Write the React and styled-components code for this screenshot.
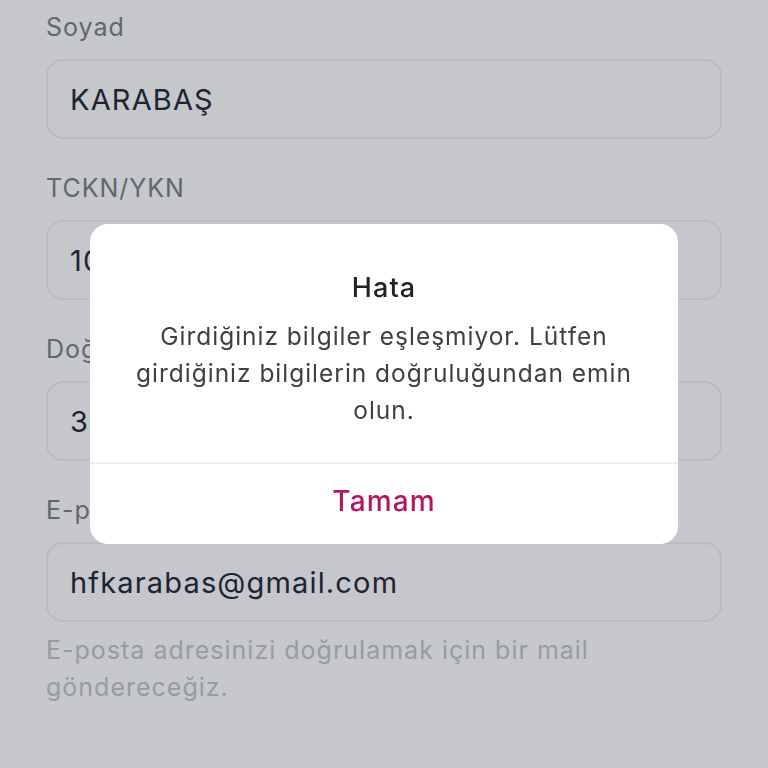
import React from 'react';
import styled, { createGlobalStyle } from 'styled-components';

const GlobalStyle = createGlobalStyle`
  * { box-sizing: border-box; }
  html, body { margin: 0; padding: 0; background: #ffffff; }
  body { font-family: Inter, "Noto Sans", "Liberation Sans", sans-serif; }
`;

const Page = styled.div`
  min-height: 768px;
  padding: 11px 46px 0 46px;
  background: #ffffff;
  display: flex;
  flex-direction: column;
`;

const Field = styled.div`
  display: flex;
  flex-direction: column;
  gap: 16px;
  margin-bottom: 33px;
`;

const Label = styled.label`
  font-size: 25px;
  line-height: 32px;
  letter-spacing: 0.04em;
  color: #7c8086;
`;

const InputBox = styled.div`
  height: 80px;
  border: 2px solid #eeeff2;
  border-radius: 17px;
  background: #fefefe;
  display: flex;
  align-items: center;
  padding: 0 22px;
  font-size: 29px;
  letter-spacing: 0.04em;
  color: #232837;
  white-space: nowrap;
  overflow: hidden;
`;

const Helper = styled.p`
  margin: -23px 0 0 0;
  font-size: 25px;
  line-height: 37px;
  letter-spacing: 0.04em;
  color: #c2c5cc;
  max-width: 580px;
`;

const Overlay = styled.div`
  position: fixed;
  inset: 0;
  background: rgba(17, 24, 39, 0.24);
  display: flex;
  align-items: center;
  justify-content: center;
`;

const Dialog = styled.div`
  width: 588px;
  height: 320px;
  background: #ffffff;
  border-radius: 18px;
  display: flex;
  flex-direction: column;
  overflow: hidden;
`;

const DialogBody = styled.div`
  flex: 1;
  padding: 47px 36px 0 36px;
  text-align: center;
`;

const DialogTitle = styled.h2`
  margin: 0 0 13px 0;
  font-size: 27px;
  line-height: 34px;
  font-weight: 500;
  letter-spacing: 0.04em;
  color: #222326;
`;

const DialogText = styled.p`
  margin: 0;
  font-size: 24.5px;
  line-height: 37px;
  letter-spacing: 0.04em;
  color: #3f4044;
`;

const DialogButton = styled.button`
  height: 82px;
  border: none;
  border-top: 2px solid #efeff1;
  background: transparent;
  font-family: inherit;
  font-size: 28px;
  font-weight: 500;
  letter-spacing: 0.04em;
  color: #b3175e;
  padding: 0 0 6px 0;
  cursor: pointer;
`;

const fields = [
  { label: 'Soyad', value: 'KARABAŞ' },
  { label: 'TCKN/YKN', value: '10345678912' },
  { label: 'Doğum Tarihi', value: '31.05.1990' },
  { label: 'E-posta', value: 'hfkarabas@gmail.com' },
];

export default function App() {
  return (
    <>
      <GlobalStyle />
      <Page>
        {fields.map((f) => (
          <Field key={f.label}>
            <Label>{f.label}</Label>
            <InputBox>{f.value}</InputBox>
          </Field>
        ))}
        <Helper>E-posta adresinizi doğrulamak için bir mail göndereceğiz.</Helper>
      </Page>
      <Overlay>
        <Dialog>
          <DialogBody>
            <DialogTitle>Hata</DialogTitle>
            <DialogText>
              Girdiğiniz bilgiler eşleşmiyor. Lütfen girdiğiniz bilgilerin doğruluğundan emin olun.
            </DialogText>
          </DialogBody>
          <DialogButton>Tamam</DialogButton>
        </Dialog>
      </Overlay>
    </>
  );
}
